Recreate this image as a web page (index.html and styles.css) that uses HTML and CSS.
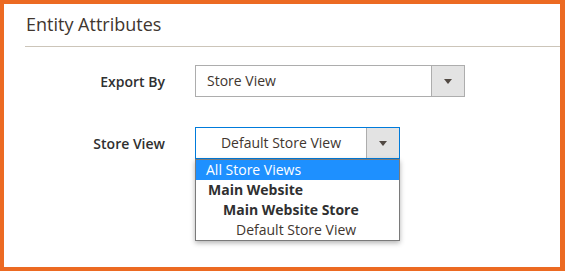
FILE: index.html
```html
<!DOCTYPE html>
<html lang="en">
<head>
    <meta charset="UTF-8">
    <title>Entity Attributes</title>
    <link rel="stylesheet" href="styles.css">
</head>
<body>
<div class="frame">
    <div class="section-title">Entity Attributes</div>
    <div class="fields">
        <div class="field">
            <label class="label">Export By</label>
            <div class="select wide">
                <span class="value">Store View</span>
                <span class="toggle"><i class="arrow"></i></span>
            </div>
        </div>
        <div class="field">
            <label class="label">Store View</label>
            <div class="select narrow focused">
                <span class="value centered">Default Store View</span>
                <span class="toggle"><i class="arrow"></i></span>
                <ul class="options">
                    <li class="option selected">All Store Views</li>
                    <li class="option group">Main Website</li>
                    <li class="option group sub">Main Website Store</li>
                    <li class="option view">Default Store View</li>
                </ul>
            </div>
        </div>
    </div>
</div>
</body>
</html>
```

FILE: styles.css
```css
* {
    box-sizing: border-box;
}
body {
    margin: 0;
    font-family: "Open Sans", "Liberation Sans", sans-serif;
    background-color: #fff;
}
.frame {
    height: 271px;
    border: 4px solid #ec6a22;
    border-right-width: 5px;
    padding: 8px 0 0 21px;
    overflow: hidden;
}
.section-title {
    font-size: 18px;
    line-height: 24px;
    color: #41362f;
    padding: 0 0 10px 1px;
    border-bottom: 1px solid #ccc5b9;
}
.fields {
    display: flex;
    flex-direction: column;
    gap: 30px;
    padding-top: 18px;
}
.field {
    display: flex;
    align-items: center;
    gap: 30px;
}
.label {
    width: 140px;
    text-align: right;
    font-size: 14px;
    font-weight: 600;
    color: #303030;
}
.select {
    position: relative;
    display: flex;
    height: 32px;
    border: 1px solid #adadad;
    background-color: #fff;
    font-size: 14px;
    color: #41362f;
}
.select.wide {
    width: 270px;
}
.select.narrow {
    width: 205px;
}
.select.focused {
    border-color: #007bdb;
}
.value {
    flex: 1;
    padding-left: 11px;
    line-height: 30px;
}
.value.centered {
    padding-left: 0;
    text-align: center;
}
.toggle {
    display: flex;
    align-items: center;
    justify-content: center;
    width: 33px;
    border-left: 1px solid #adadad;
    background-color: #e3e3e3;
}
.arrow {
    width: 0;
    height: 0;
    border-left: 4px solid transparent;
    border-right: 4px solid transparent;
    border-top: 5px solid #514943;
}
.options {
    position: absolute;
    top: 31px;
    left: -1px;
    width: 205px;
    margin: 0;
    padding: 0;
    list-style: none;
    background-color: #fff;
    border: 1px solid #7a7a7a;
    box-shadow: 0 2px 5px rgba(0, 0, 0, 0.3);
}
.option {
    height: 20px;
    line-height: 20px;
    font-size: 14px;
    color: #303030;
    padding-left: 10px;
}
.option.selected {
    background-color: #1e90ff;
    color: #fff;
}
.option.group {
    font-weight: 700;
    padding-left: 12px;
}
.option.group.sub {
    padding-left: 27px;
}
.option.view {
    padding-left: 40px;
    color: #41362f;
}
```
